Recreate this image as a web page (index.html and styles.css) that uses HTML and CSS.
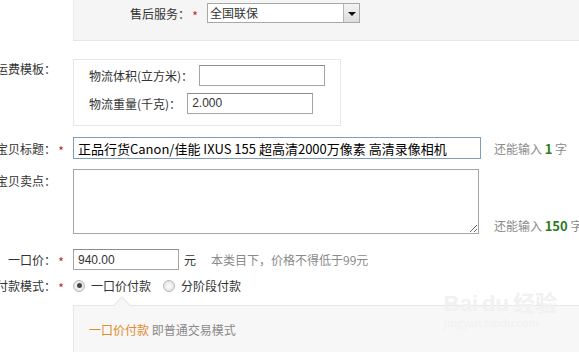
FILE: index.html
```html
<!DOCTYPE html>
<html lang="zh-CN">
<head>
  <meta charset="UTF-8">
  <title>发布宝贝</title>
  <link rel="stylesheet" href="styles.css">
</head>
<body>
  <div class="service-panel">
    <div class="field">
      <span class="lbl">售后服务：</span><span class="req">*</span>
      <div class="select">
        <span class="select-text">全国联保</span>
        <span class="select-btn"><i class="arrow"></i></span>
      </div>
    </div>
  </div>

  <div class="form">
    <div class="field field-top freight">
      <span class="lbl">运费模板：</span><span class="req"></span>
      <div class="freight-box">
        <div class="freight-row">
          <span class="freight-lbl">物流体积(立方米)：</span>
          <input class="txt txt-vol" type="text" value="">
        </div>
        <div class="freight-row">
          <span class="freight-lbl">物流重量(千克)：</span>
          <input class="txt txt-vol" type="text" value="2.000">
        </div>
      </div>
    </div>

    <div class="field title-row">
      <span class="lbl">宝贝标题：</span><span class="req">*</span>
      <input class="txt txt-title" type="text" value="正品行货Canon/佳能 IXUS 155 超高清2000万像素 高清录像相机">
      <span class="count">还能输入 <b>1</b> 字</span>
    </div>

    <div class="field field-top sell-row">
      <span class="lbl lbl-top">宝贝卖点：</span><span class="req"></span>
      <textarea class="area"></textarea>
      <span class="count count-bottom">还能输入 <b>150</b> 字</span>
    </div>

    <div class="field price-row">
      <span class="lbl">一口价：</span><span class="req">*</span>
      <input class="txt txt-price" type="text" value="940.00">
      <span class="unit">元</span>
      <span class="tip">本类目下，价格不得低于99元</span>
    </div>

    <div class="field pay-row">
      <span class="lbl">付款模式：</span><span class="req">*</span>
      <label class="radio"><span class="dot checked"></span>一口价付款</label>
      <label class="radio"><span class="dot"></span>分阶段付款</label>
    </div>
  </div>

  <div class="pay-panel">
    <span class="notch"></span>
    <span class="pay-name">一口价付款</span> <span class="pay-desc">即普通交易模式</span>
  </div>

  <div class="watermark">
    <div class="wm-logo">Bai<span class="wm-du">du</span>经验</div>
    <div class="wm-url">jingyan.baidu.com</div>
  </div>
</body>
</html>
```

FILE: styles.css
```css
body {
  margin: 0;
  width: 579px;
  height: 352px;
  overflow: hidden;
  position: relative;
  background: #fff;
  color: #333;
  font-family: "Noto Sans CJK SC", "Liberation Sans", sans-serif;
  font-size: 12px;
}

.field {
  display: flex;
  align-items: center;
}

.field > * {
  flex: none;
}

.field-top {
  align-items: flex-start;
}

.lbl {
  width: 60px;
  text-align: right;
  white-space: nowrap;
}

.req {
  width: 10px;
  padding-right: 7px;
  text-align: center;
  color: #c0262d;
  font-size: 12px;
  position: relative;
  top: 2px;
}

/* top grey panel */
.service-panel {
  margin-left: 73px;
  height: 41px;
  background: #f5f5f5;
  border-left: 1px solid #ebebeb;
  border-bottom: 1px solid #e6e6e6;
  padding-left: 56px;
  padding-top: 3px;
  box-sizing: border-box;
}

.select {
  display: flex;
  width: 153px;
  height: 20px;
  border: 1px solid #a8a8a8;
  background: #fff;
  box-sizing: border-box;
}

.select-text {
  flex: 1;
  line-height: 18px;
  padding-left: 2px;
}

.select-btn {
  width: 15px;
  border-left: 1px solid #b5b5b5;
  background: linear-gradient(#f4f4f4, #dcdcdc);
  display: flex;
  align-items: center;
  justify-content: center;
}

.arrow {
  width: 0;
  height: 0;
  border-left: 4px solid transparent;
  border-right: 4px solid transparent;
  border-top: 4px solid #111;
  margin-top: 2px;
}

/* form rows */
.form {
  margin-left: -4px;
}

.freight {
  margin-top: 18px;
}

.freight .lbl {
  padding-top: 1px;
}

.freight-box {
  width: 268px;
  height: 67px;
  border: 1px solid #e6e6e6;
  box-sizing: border-box;
  padding: 5px 0 0 15px;
}

.freight-row {
  display: flex;
  align-items: center;
  height: 20px;
}

.freight-row + .freight-row {
  margin-top: 8px;
}

.freight-lbl {
  white-space: nowrap;
  margin-right: 6px;
}

.txt {
  font-family: "Liberation Sans", "Noto Sans CJK SC", sans-serif;
  font-size: 12px;
  color: #333;
  border: 1px solid #a5a5a5;
  border-top-color: #8c8c8c;
  box-sizing: border-box;
  padding: 0 4px;
  margin: 0;
  outline: none;
}

.txt-vol {
  width: 126px;
  height: 21px;
}

.title-row {
  margin-top: 11px;
}

.txt-title {
  width: 408px;
  height: 22px;
  font-size: 13px;
  border: 1px solid #7f9db9;
  padding: 0 4px;
  font-family: "Noto Sans CJK SC", "Liberation Sans", sans-serif;
  color: #000;
}

.count {
  margin-left: 13px;
  color: #8a8a8a;
  white-space: nowrap;
}

.count b {
  color: #2e7d1c;
  font-size: 13px;
}

.sell-row {
  margin-top: 10px;
}

.lbl-top {
  padding-top: 3px;
}

.area {
  width: 406px;
  height: 65px;
  margin: 0;
  border: 1px solid #a5a5a5;
  box-sizing: border-box;
  resize: both;
}

.count-bottom {
  align-self: flex-end;
  margin-left: 15px;
  margin-bottom: -1px;
}

.price-row {
  margin-top: 15px;
}

.txt-price {
  width: 106px;
  height: 21px;
}

.unit {
  margin-left: 5px;
}

.tip {
  margin-left: 15px;
  color: #8a8a8a;
}

.pay-row {
  margin-top: 7px;
}

.radio {
  display: flex;
  align-items: center;
  margin-right: 12px;
}

.dot {
  width: 10px;
  height: 10px;
  border: 1px solid #b8b8b8;
  border-radius: 50%;
  background: radial-gradient(#fdfdfd, #dcdcdc);
  margin-right: 6px;
  display: flex;
  align-items: center;
  justify-content: center;
}

.dot.checked::after {
  content: "";
  width: 5px;
  height: 5px;
  border-radius: 50%;
  background: #444;
}

/* bottom panel */
.pay-panel {
  position: relative;
  margin-left: 73px;
  margin-top: 11px;
  height: 60px;
  background: #f7f7f7;
  border-top: 1px solid #e6e6e6;
  border-left: 1px solid #e6e6e6;
  box-sizing: border-box;
  padding: 15px 0 0 15px;
}

.notch {
  position: absolute;
  top: -7px;
  left: 42px;
  width: 11px;
  height: 11px;
  background: #f7f7f7;
  border-top: 1px solid #e6e6e6;
  border-left: 1px solid #e6e6e6;
  transform: rotate(45deg);
}

.pay-name {
  color: #e38a2b;
}

.pay-desc {
  color: #8a8a8a;
}

.watermark {
  position: absolute;
  right: 22px;
  bottom: 24px;
  color: #f1f1f1;
  text-align: left;
  pointer-events: none;
}

.wm-logo {
  font-family: "Liberation Sans", "Noto Sans CJK SC", sans-serif;
  font-size: 22px;
  font-weight: bold;
  line-height: 24px;
}

.wm-du {
  margin: 0 4px;
}

.wm-url {
  font-size: 11px;
  line-height: 12px;
}
```
